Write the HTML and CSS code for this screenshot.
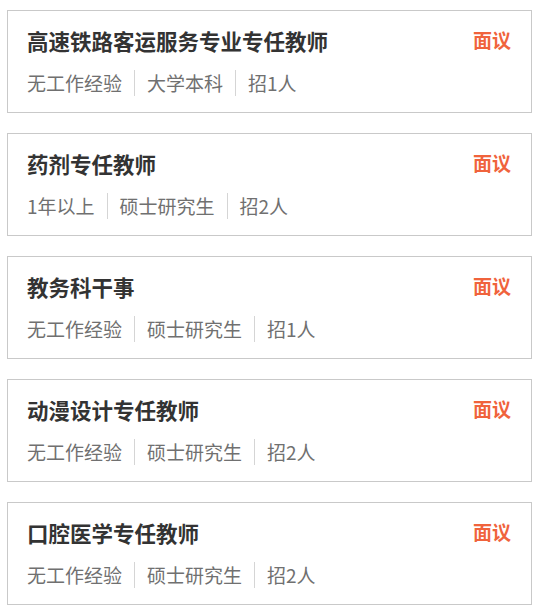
FILE: index.html
```html
<!DOCTYPE html>
<html lang="zh-CN">
<head>
<meta charset="UTF-8">
<meta name="viewport" content="width=device-width, initial-scale=1.0">
<title>招聘岗位</title>
<link rel="stylesheet" href="styles.css">
</head>
<body>
<div class="job-list">
    <div class="job">
        <div class="job-head">
            <div class="job-name">高速铁路客运服务专业专任教师</div>
            <div class="job-pay">面议</div>
        </div>
        <div class="job-meta">
            <span>无工作经验</span>
            <span>大学本科</span>
            <span>招1人</span>
        </div>
    </div>
    <div class="job">
        <div class="job-head">
            <div class="job-name">药剂专任教师</div>
            <div class="job-pay">面议</div>
        </div>
        <div class="job-meta">
            <span>1年以上</span>
            <span>硕士研究生</span>
            <span>招2人</span>
        </div>
    </div>
    <div class="job">
        <div class="job-head">
            <div class="job-name">教务科干事</div>
            <div class="job-pay">面议</div>
        </div>
        <div class="job-meta">
            <span>无工作经验</span>
            <span>硕士研究生</span>
            <span>招1人</span>
        </div>
    </div>
    <div class="job">
        <div class="job-head">
            <div class="job-name">动漫设计专任教师</div>
            <div class="job-pay">面议</div>
        </div>
        <div class="job-meta">
            <span>无工作经验</span>
            <span>硕士研究生</span>
            <span>招2人</span>
        </div>
    </div>
    <div class="job">
        <div class="job-head">
            <div class="job-name">口腔医学专任教师</div>
            <div class="job-pay">面议</div>
        </div>
        <div class="job-meta">
            <span>无工作经验</span>
            <span>硕士研究生</span>
            <span>招2人</span>
        </div>
    </div>
</div>
</body>
</html>
```

FILE: styles.css
```css
body {
    margin: 0;
    background: #ffffff;
    font-family: "Microsoft YaHei", "Noto Sans CJK SC", "Liberation Sans", sans-serif;
}
.job-list {
    padding: 10px 6px 0 7px;
}
.job {
    border: 1px solid #c9c9c9;
    padding: 16px 20px 16px 19px;
    margin-bottom: 20px;
    background: #ffffff;
}
.job-head {
    display: flex;
    justify-content: space-between;
    align-items: flex-start;
    height: 30px;
    margin-bottom: 13px;
}
.job-name {
    font-size: 21.5px;
    line-height: 28px;
    font-weight: bold;
    color: #333333;
}
.job-pay {
    font-size: 19px;
    line-height: 26px;
    font-weight: bold;
    color: #f0633c;
}
.job-meta {
    display: flex;
    align-items: center;
    height: 26px;
    font-size: 19px;
    line-height: 26px;
    color: #707070;
}
.job-meta span {
    padding: 0 12px;
    border-left: 1px solid #d5d5d5;
}
.job-meta span:first-child {
    padding-left: 0;
    border-left: none;
}
```
